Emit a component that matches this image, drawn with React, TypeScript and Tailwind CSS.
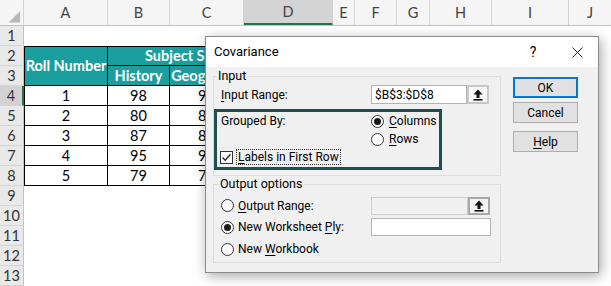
import React from 'react';

const COLS = [
  { l: '', w: 'w-[24px]' },
  { l: 'A', w: 'w-[84px]' },
  { l: 'B', w: 'w-[62px]' },
  { l: 'C', w: 'w-[74px]' },
  { l: 'D', w: 'w-[89px]' },
  { l: 'E', w: 'w-[22px]' },
  { l: 'F', w: 'w-[42px]' },
  { l: 'G', w: 'w-[33px]' },
  { l: 'H', w: 'w-[62px]' },
  { l: 'I', w: 'w-[77px]' },
  { l: 'J', w: 'flex-1' },
];

const DATA = [
  [1, 98, 92, 85],
  [2, 80, 85, 78],
  [3, 87, 88, 90],
  [4, 95, 90, 93],
  [5, 79, 76, 82],
];

function RowHead({ n, active }: { n: number; active?: boolean }) {
  return (
    <div
      className={`flex items-center justify-center border-b border-[#d4d4d4] text-[#333] ${
        active ? 'bg-[#d2d2d2] border-r-2 border-r-[#217346]' : 'bg-[#e9e9e9] border-r border-r-[#c3c3c3]'
      }`}
    >
      {n}
    </div>
  );
}

function Sheet() {
  return (
    <div className="font-['Lato',sans-serif] text-[14.5px]">
      <div className="flex h-[26px] bg-[#f5f5f5] border-b border-[#c3c3c3] text-[#444]">
        {COLS.map((c, i) => (
          <div
            key={i}
            className={`${c.w} flex items-center justify-center ${
              c.l === 'D' ? 'bg-[#d4d4d4] border-b-2 border-[#217346]' : ''
            } ${i < COLS.length - 1 ? 'border-r border-r-[#d4d4d4]' : ''}`}
          >
            {i === 0 ? (
              <svg width="24" height="26" viewBox="0 0 24 26">
                <polygon points="21,11 21,23 9,23" fill="#b8b8b8" />
              </svg>
            ) : (
              c.l
            )}
          </div>
        ))}
      </div>
      <div className="grid grid-cols-[24px_84px_62px_74px_89px_22px_42px_33px_62px_77px_1fr] auto-rows-[20px]">
        <RowHead n={1} />
        <div className="col-span-10" />

        <RowHead n={2} />
        <div className="row-span-2 flex items-center justify-center bg-[#1a9e9e] text-white font-bold border border-black">
          Roll Number
        </div>
        <div className="col-span-3 flex items-center pl-[37px] bg-[#1a9e9e] text-white font-bold border-t border-r border-b border-black">
          Subject Scores
        </div>
        <div className="col-span-6" />

        <RowHead n={3} />
        {['History', 'Geography', 'Maths'].map((h) => (
          <div
            key={h}
            className="flex items-center justify-center bg-[#1a9e9e] text-white font-bold border-r border-b border-black"
          >
            {h}
          </div>
        ))}
        <div className="col-span-6" />

        {DATA.map((row, i) => (
          <React.Fragment key={i}>
            <RowHead n={i + 4} active={i === 0} />
            {row.map((v, j) => (
              <div
                key={j}
                className={`flex items-center justify-center text-black border-r border-b border-black ${
                  j === 0 ? 'border-l' : ''
                }`}
              >
                {v}
              </div>
            ))}
            <div className="col-span-6" />
          </React.Fragment>
        ))}

        {[9, 10, 11, 12, 13].map((n) => (
          <React.Fragment key={n}>
            <RowHead n={n} />
            <div className="col-span-10" />
          </React.Fragment>
        ))}
      </div>
    </div>
  );
}

function U({ children }: { children: React.ReactNode }) {
  return <span className="underline underline-offset-[2px] decoration-1">{children}</span>;
}

function Radio({ checked }: { checked?: boolean }) {
  return (
    <span className="w-[13px] h-[13px] rounded-full border border-[#333] bg-white flex items-center justify-center shrink-0">
      {checked && <span className="w-[7px] h-[7px] rounded-full bg-[#1a1a1a]" />}
    </span>
  );
}

function Checkbox() {
  return (
    <span className="w-[13px] h-[13px] border border-[#333] bg-white flex items-center justify-center shrink-0">
      <svg width="11" height="11" viewBox="0 0 11 11">
        <path d="M1.5 5.5 L4.2 8.3 L9.5 2.3" fill="none" stroke="#222" strokeWidth="1.3" />
      </svg>
    </span>
  );
}

function ArrowBtn({ disabled }: { disabled?: boolean }) {
  return (
    <span
      className={`w-[22px] h-full flex items-center justify-center ${
        disabled ? 'border-2 border-[#a8a8a8] bg-[#f4f4f4]' : 'border-2 border-[#c8c8c8] bg-[#f7f7f7]'
      }`}
    >
      <svg width="10" height="12" viewBox="0 0 10 12">
        <path d="M5 0.5 L9.5 5.5 H6.5 V9 H3.5 V5.5 H0.5 Z" fill="#111" />
        <rect x="0.5" y="10" width="9" height="1.6" fill="#111" />
      </svg>
    </span>
  );
}

function Button({ children, primary }: { children: React.ReactNode; primary?: boolean }) {
  return (
    <div
      className={`w-[65px] h-[21px] flex items-center justify-center bg-[#e1e1e1] ${
        primary ? 'border-2 border-[#0078d7]' : 'border border-[#adadad]'
      }`}
    >
      {children}
    </div>
  );
}

function Dialog() {
  return (
    <div className="absolute left-[205px] top-[36px] w-[394px] h-[237px] border border-[#8c8c8c] bg-[#f0f0f0] shadow-[2px_3px_12px_rgba(0,0,0,0.35)] font-['Roboto',sans-serif] text-[12px] text-black flex flex-col">
      <div className="h-[30px] bg-white flex items-center pl-[8px] shrink-0">
        <span className="text-[13px]">Covariance</span>
        <span className="ml-auto text-[14px] w-[10px] text-center">?</span>
        <svg className="ml-[34px] mr-[15px]" width="11" height="11" viewBox="0 0 11 11">
          <path d="M0.5 0.5 L10.5 10.5 M10.5 0.5 L0.5 10.5" stroke="#222" strokeWidth="1" />
        </svg>
      </div>
      <div className="flex pl-[7px] gap-[12px]">
        <div className="w-[288px] pt-[1px]">
          <fieldset className="border border-[#dcdcdc] px-[7px] pb-[5px]">
            <legend className="ml-[-4px] px-[1px] leading-[16px] text-[12.5px]">Input</legend>
            <div className="flex items-center h-[19px] mt-[1px]">
              <span className="w-[150px]">
                <U>I</U>nput Range:
              </span>
              <div className="flex h-[19px] w-[118px]">
                <span className="w-[97px] h-full bg-white border border-[#b4b4b4] flex items-center pl-[3px] text-[12px]">
                  $B$3:$D$8
                </span>
                <ArrowBtn />
              </div>
            </div>
            <div className="mt-[5px] ml-[-7px] w-[228px] border-[3px] border-[#1e4f50] pl-[4px] pb-[1px]">
              <div className="grid grid-cols-[150px_1fr] auto-rows-[18px] items-center">
                <span>Grouped By:</span>
                <div className="flex items-center gap-[5px]">
                  <Radio checked />
                  <span>
                    <U>C</U>olumns
                  </span>
                </div>
                <span />
                <div className="flex items-center gap-[5px]">
                  <Radio />
                  <span>
                    <U>R</U>ows
                  </span>
                </div>
                <div className="col-span-2 flex items-center gap-[3px] ml-[-1px]">
                  <Checkbox />
                  <span className="border border-dotted border-[#333] px-[1px] leading-[14px]">
                    <U>L</U>abels in First Row
                  </span>
                </div>
              </div>
            </div>
          </fieldset>
          <fieldset className="border border-[#dcdcdc] px-[7px] pt-[3px] pb-[2px]">
            <legend className="ml-[-2px] px-[1px] leading-[16px] text-[12.5px]">Output options</legend>
            <div className="flex items-center h-[21px]">
              <div className="w-[150px] flex items-center gap-[4px]">
                <Radio />
                <span>
                  <U>O</U>utput Range:
                </span>
              </div>
              <div className="flex h-[18px] w-[119px]">
                <span className="w-[97px] h-full bg-[#f0f0f0] border border-[#cccccc]" />
                <ArrowBtn disabled />
              </div>
            </div>
            <div className="flex items-center h-[22px]">
              <div className="w-[150px] flex items-center gap-[4px]">
                <Radio checked />
                <span>
                  New Worksheet <U>P</U>ly:
                </span>
              </div>
              <span className="w-[120px] h-[18px] bg-white border border-[#b4b4b4]" />
            </div>
            <div className="flex items-center h-[22px]">
              <div className="flex items-center gap-[4px]">
                <Radio />
                <span>
                  New <U>W</U>orkbook
                </span>
              </div>
            </div>
          </fieldset>
        </div>
        <div className="flex flex-col pt-[10px]">
          <Button primary>OK</Button>
          <div className="mt-[4px]">
            <Button>Cancel</Button>
          </div>
          <div className="mt-[8px]">
            <Button>
              <span>
                <U>H</U>elp
              </span>
            </Button>
          </div>
        </div>
      </div>
    </div>
  );
}

export default function App() {
  return (
    <div className="relative w-[611px] h-[286px] overflow-hidden bg-white">
      <Sheet />
      <Dialog />
    </div>
  );
}
